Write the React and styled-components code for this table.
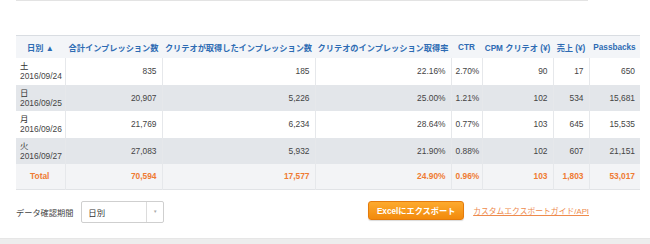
import React from "react";
import styled, { createGlobalStyle } from "styled-components";

const GlobalStyle = createGlobalStyle`
  html, body {
    margin: 0;
    padding: 0;
    background: #fff;
    font-family: "Liberation Sans", "Noto Sans CJK JP", sans-serif;
  }
`;

const Page = styled.div`
  width: 650px;
  height: 244px;
  display: flex;
  flex-direction: column;
  overflow: hidden;
`;

const TopRule = styled.div`
  width: 572px;
  height: 1px;
  margin-left: 16px;
  background: #e3e3e3;
`;

const Table = styled.table`
  margin: 34px 0 0 16px;
  width: 624px;
  border-collapse: collapse;
  table-layout: fixed;
  font-size: 8.4px;
  color: #444;
`;

const HeadCell = styled.th`
  height: 22px;
  padding: 0;
  background: #f3f5f8;
  border-top: 1px solid #d9dde2;
  color: #2d6bb3;
  font-weight: bold;
  text-align: center;
  white-space: nowrap;
  font-size: 8.2px;
`;

const Row = styled.tr`
  background: ${({ $shade }) => ($shade ? "#e3e6ea" : "#fff")};
  height: 26.5px;
`;

const TotalRow = styled.tr`
  background: #f3f4f6;
  height: 25px;
  border-bottom: 1px solid #e1e3e6;
`;

const Cell = styled.td`
  padding: 0 5px 0 4px;
  text-align: ${({ $align }) => $align || "right"};
  border-right: 1px solid #e6e8eb;
  vertical-align: middle;
  white-space: nowrap;
  line-height: 10px;
  &:last-child {
    border-right: none;
  }
`;

const TotalCell = styled(Cell)`
  color: #ef7b33;
  font-weight: bold;
`;

const Day = styled.div`
  color: #333;
`;

const Footer = styled.div`
  display: flex;
  align-items: center;
  margin: 11px 0 0 16px;
  width: 573px;
  height: 22px;
`;

const Label = styled.span`
  font-size: 8.2px;
  color: #444;
  margin-right: 8px;
`;

const Select = styled.div`
  display: flex;
  width: 81px;
  height: 20px;
  border: 1px solid #cfcfcf;
  border-radius: 2px;
  background: #fff;
  font-size: 8.4px;
  color: #333;
`;

const SelectValue = styled.div`
  flex: 1;
  display: flex;
  align-items: center;
  padding-left: 6px;
`;

const Caret = styled.div`
  width: 16px;
  border-left: 1px solid #dcdcdc;
  display: flex;
  align-items: center;
  justify-content: center;
  color: #aaa;
  font-size: 4.5px;
`;

const Actions = styled.div`
  margin-left: auto;
  display: flex;
  align-items: center;
  gap: 9px;
`;

const ExportButton = styled.button`
  width: 96px;
  height: 19px;
  margin-top: -3px;
  padding: 0;
  border: 1px solid #e47b0c;
  border-radius: 3px;
  background: linear-gradient(#fdaa2e, #f28a0c);
  color: #fff;
  font-family: inherit;
  font-size: 8.2px;
  font-weight: bold;
  box-shadow: 0 1px 1px rgba(0, 0, 0, 0.15);
`;

const GuideLink = styled.a`
  color: #ee8a4c;
  font-size: 7.8px;
  text-decoration: underline;
  margin-top: -3px;
`;

const BottomBand = styled.div`
  margin-top: auto;
  height: 5px;
  background: #ededed;
  border-top: 1px solid #e6e6e6;
`;

const widths = [49, 97, 153, 136, 31, 71, 36, 51];
const headers = [
  "日別 ▲",
  "合計インプレッション数",
  "クリテオが取得したインプレッション数",
  "クリテオのインプレッション取得率",
  "CTR",
  "CPM クリテオ (¥)",
  "売上 (¥)",
  "Passbacks",
];

const rows = [
  { day: "土", date: "2016/09/24", values: ["835", "185", "22.16%", "2.70%", "90", "17", "650"] },
  { day: "日", date: "2016/09/25", values: ["20,907", "5,226", "25.00%", "1.21%", "102", "534", "15,681"] },
  { day: "月", date: "2016/09/26", values: ["21,769", "6,234", "28.64%", "0.77%", "103", "645", "15,535"] },
  { day: "火", date: "2016/09/27", values: ["27,083", "5,932", "21.90%", "0.88%", "102", "607", "21,151"] },
];

const totals = ["70,594", "17,577", "24.90%", "0.96%", "103", "1,803", "53,017"];

export default function App() {
  return (
    <Page>
      <GlobalStyle />
      <TopRule />
      <Table>
        <colgroup>
          {widths.map((w, i) => (
            <col key={i} style={{ width: w }} />
          ))}
        </colgroup>
        <thead>
          <tr>
            {headers.map(h => (
              <HeadCell key={h}>{h}</HeadCell>
            ))}
          </tr>
        </thead>
        <tbody>
          {rows.map((r, i) => (
            <Row key={r.date} $shade={i % 2 === 1}>
              <Cell $align="left">
                <Day>{r.day}</Day>
                <div>{r.date}</div>
              </Cell>
              {r.values.map((v, j) => (
                <Cell key={j} $align={j === 3 ? "left" : "right"}>
                  {v}
                </Cell>
              ))}
            </Row>
          ))}
          <TotalRow>
            <TotalCell $align="center">Total</TotalCell>
            {totals.map((v, j) => (
              <TotalCell key={j} $align={j === 3 ? "left" : "right"}>
                {v}
              </TotalCell>
            ))}
          </TotalRow>
        </tbody>
      </Table>
      <Footer>
        <Label>データ確認期間</Label>
        <Select>
          <SelectValue>日別</SelectValue>
          <Caret>▼</Caret>
        </Select>
        <Actions>
          <ExportButton>Excelにエクスポート</ExportButton>
          <GuideLink href="#">カスタムエクスポートガイド/API</GuideLink>
        </Actions>
      </Footer>
      <BottomBand />
    </Page>
  );
}
